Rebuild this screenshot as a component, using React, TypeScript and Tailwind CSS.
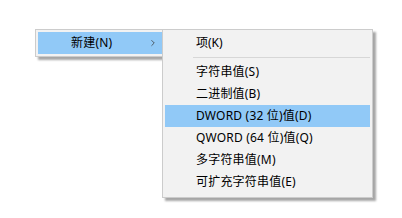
import { ChevronRight } from 'lucide-react'

const items = [
  { label: '字符串值(S)' },
  { label: '二进制值(B)' },
  { label: 'DWORD (32 位)值(D)', active: true },
  { label: 'QWORD (64 位)值(Q)' },
  { label: '多字符串值(M)' },
  { label: '可扩充字符串值(E)' },
]

const font = { fontFamily: '"Segoe UI", "Noto Sans", "Noto Sans CJK SC", sans-serif' }

export default function App() {
  return (
    <div className="w-[402px] h-[218px] bg-white text-[12px] text-black" style={font}>
      <div className="flex items-start pt-[29px] pl-[35px]">
        {/* parent menu */}
        <div className="w-[130px] bg-[#f2f2f2] border border-[#cccccc] p-[2px] shadow-[3px_3px_2px_rgba(0,0,0,0.35)]">
          <div className="h-[22px] bg-[#91c9f7] flex items-center pl-[33px] pr-[4px]">
            <span className="flex-1 tracking-[0.2px]">新建(N)</span>
            <ChevronRight className="w-[10px] h-[10px] text-[#333]" strokeWidth={1.75} />
          </div>
        </div>

        {/* submenu */}
        <div className="relative z-10 -ml-[3px] w-[211px] bg-[#f2f2f2] border border-[#cccccc] pt-[2px] pb-[4px] px-[2px] shadow-[3px_3px_2px_rgba(0,0,0,0.35)]">
          <div className="h-[22px] flex items-center pl-[31px]">项(K)</div>
          <div className="h-[7px] flex items-center pl-[28px]">
            <div className="h-px w-full bg-[#d7d7d7]" />
          </div>
          {items.map((item, i) => (
            <div
              key={i}
              className={`h-[22px] flex items-center pl-[31px] tracking-[0.2px] ${item.active ? 'bg-[#91c9f7]' : ''}`}
            >
              {item.label}
            </div>
          ))}
        </div>
      </div>
    </div>
  )
}
